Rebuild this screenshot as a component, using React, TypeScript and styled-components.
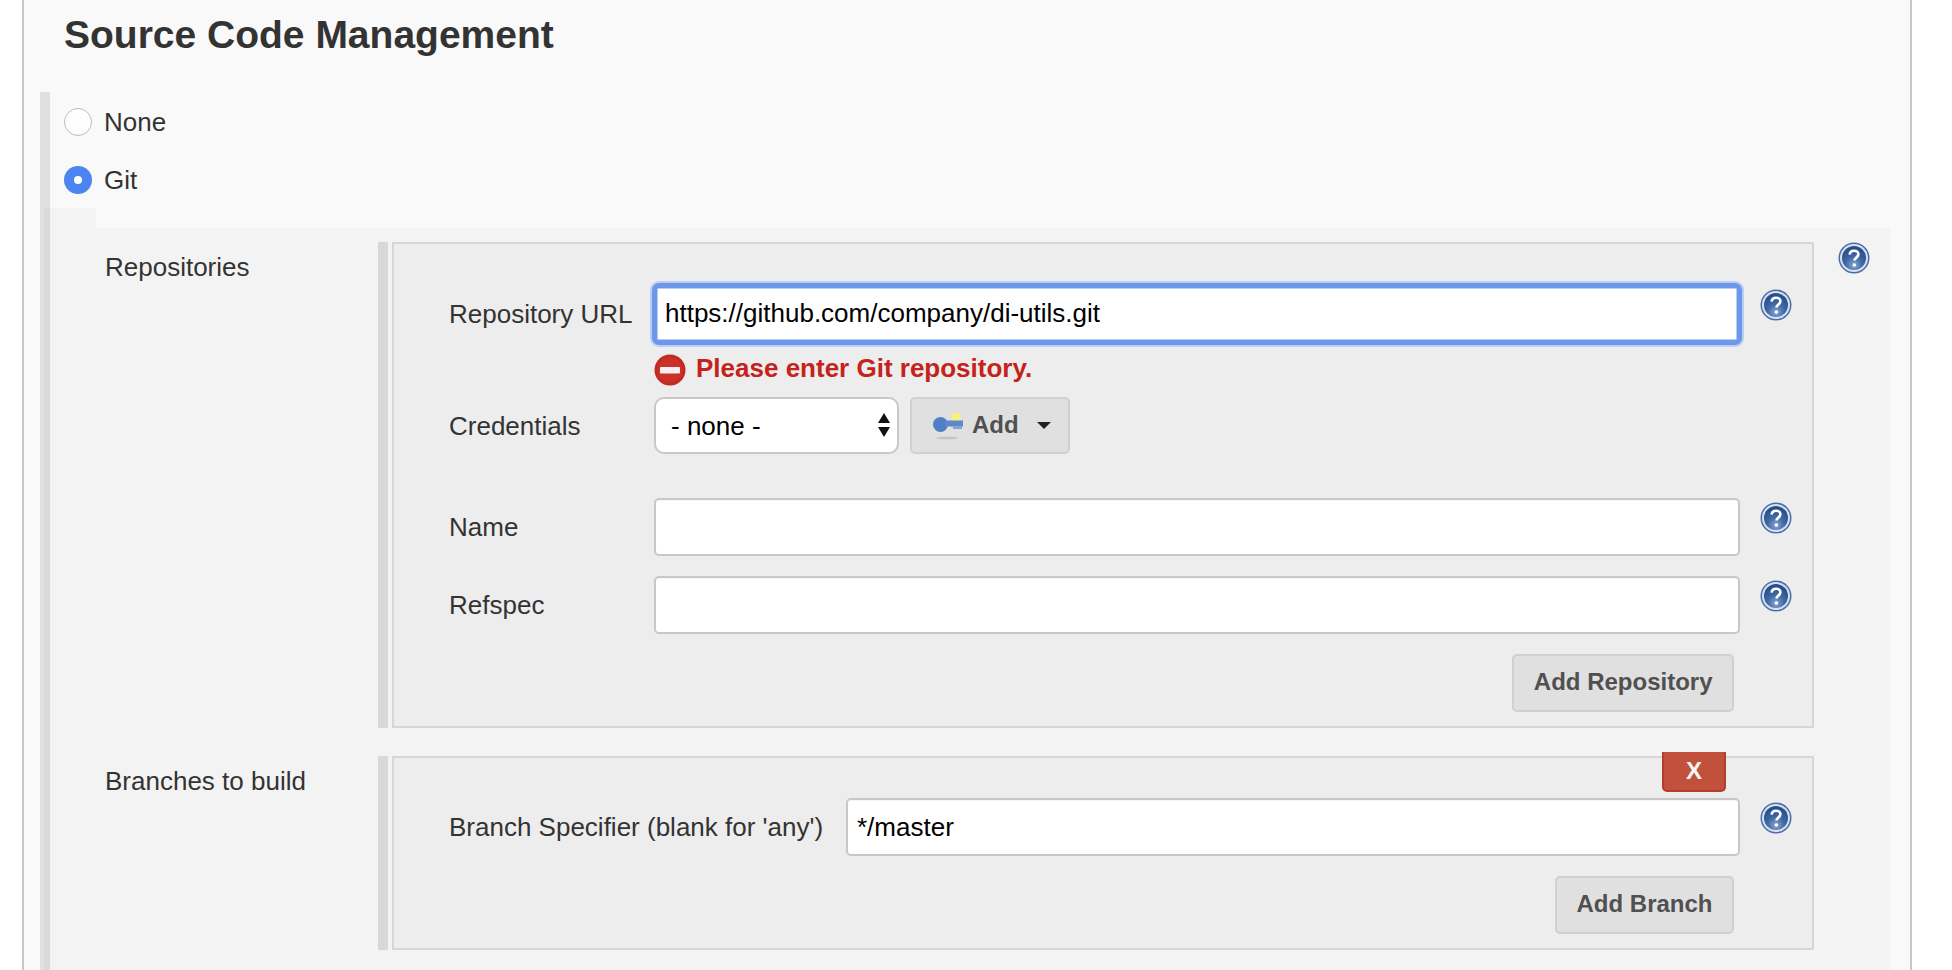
import React from "react";
import styled, { createGlobalStyle } from "styled-components";

const Global = createGlobalStyle`
  html, body { margin: 0; padding: 0; background: #fff; height: 970px; overflow: hidden; }
  body { font-family: "Liberation Sans", Arial, sans-serif; color: #333; }
  * { box-sizing: border-box; }
`;

const Panel = styled.div`
  margin: 0 40px 0 22px;
  height: 970px;
  overflow: hidden;
  background: #f9f9f9;
  border-left: 2px solid #c8c8c8;
  border-right: 2px solid #c8c8c8;
`;
const Title = styled.h2`
  margin: 0;
  height: 92px;
  padding: 12px 0 0 40px;
  font-size: 39px;
  line-height: 46px;
  font-weight: 700;
  color: #333;
`;
const Section = styled.div`
  margin: 0 20px 0 16px;
  border-left: 10px solid #e0e0e0;
  padding-top: 1px;
`;
const RadioRow = styled.label`
  display: flex;
  align-items: center;
  gap: 12px;
  height: 58px;
  padding-left: 14px;
  font-size: 26px;
  color: #333;
`;
const RadioDot = styled.span<{ $checked?: boolean }>`
  width: 28px;
  height: 28px;
  border-radius: 50%;
  flex: none;
  display: flex;
  align-items: center;
  justify-content: center;
  background: ${(p) => (p.$checked ? "#4a85f2" : "linear-gradient(#fff, #fdfdfd)")};
  border: ${(p) => (p.$checked ? "none" : "1.5px solid #bdbdbd")};
  &::after {
    content: "";
    display: ${(p) => (p.$checked ? "block" : "none")};
    width: 8px;
    height: 8px;
    border-radius: 50%;
    background: #fff;
  }
`;
const Nested = styled.div`
  margin: -1px 0 0 -6px;
`;
const NestedTab = styled.div`
  width: 52px;
  height: 20px;
  background: rgba(0, 0, 0, 0.025);
`;
const NestedBody = styled.div`
  background: rgba(0, 0, 0, 0.025);
  padding-top: 14px;
  height: 760px;
`;
const Property = styled.div<{ $gap?: number }>`
  display: grid;
  grid-template-columns: 334px 10px 1fr 32px;
  margin-top: ${(p) => p.$gap ?? 0}px;
  margin-right: 20px;
`;
const PropertyLabel = styled.div`
  padding: 11px 0 0 61px;
  font-size: 26px;
  line-height: 28px;
  color: #333;
`;
const PropertyBar = styled.div`
  background: #d8d8d8;
`;
const Box = styled.div`
  margin: 0 24px 0 4px;
  background: #ededed;
  border: 2px solid #d6d6d6;
  padding: 0 20px 0 55px;
`;
const Row = styled.div<{ $top: number; $label?: number }>`
  display: grid;
  grid-template-columns: ${(p) => p.$label ?? 205}px 1fr 52px;
  align-items: center;
  margin-top: ${(p) => p.$top}px;
`;
const HelpSlot = styled.div`
  display: flex;
  justify-content: flex-end;
  align-self: start;
  padding-top: 4px;
`;
const RowLabel = styled.div`
  font-size: 26px;
  line-height: 28px;
  color: #333;
  white-space: nowrap;
`;
const TextInput = styled.input<{ $focused?: boolean }>`
  display: block;
  width: 100%;
  height: 58px;
  padding: ${(p) => (p.$focused ? "0 7px 2px 8px" : "0 9px")};
  font: 26px "Liberation Sans", Arial, sans-serif;
  color: #000;
  background: #fff;
  outline: none;
  border-radius: 5px;
  border: ${(p) => (p.$focused ? "3px solid #6d97ea" : "2px solid #c8c8c8")};
  box-shadow: ${(p) =>
    p.$focused
      ? "inset 0 0 0 1px #b8cff5, 0 0 0 2px #6d97ea, 0 0 0 4px #b8cff5"
      : "inset 0 1px 1px rgba(0,0,0,.04)"};
`;
const ErrorLine = styled.div`
  display: flex;
  align-items: center;
  gap: 10px;
  margin: 10px 0 0 205px;
  height: 34px;
  font-size: 26px;
  font-weight: 700;
  color: #c4231b;
`;
const ErrorText = styled.span`
  padding-bottom: 4px;
`;
const Controls = styled.div`
  display: flex;
  gap: 11px;
`;
const SelectWrap = styled.div`
  position: relative;
  width: 245px;
  height: 57px;
`;
const Select = styled.select`
  appearance: none;
  width: 100%;
  height: 100%;
  padding: 0 15px;
  border-radius: 10px;
  border: 2px solid #c8c8c8;
  background: #fff;
  color: #000;
  font: 26px "Liberation Sans", Arial, sans-serif;
`;
const SelectArrows = styled.svg`
  position: absolute;
  right: 9px;
  top: 16px;
  pointer-events: none;
`;
const Button = styled.button`
  display: inline-flex;
  align-items: center;
  justify-content: center;
  height: 58px;
  padding: 0 19.5px 2px;
  border: 2px solid #d0d0d0;
  border-radius: 5px;
  background: #e0e0e0;
  color: #505050;
  font: 700 24px "Liberation Sans", Arial, sans-serif;
`;
const AddButton = styled(Button)`
  width: 160px;
  height: 57px;
  padding: 0 0 0 21px;
  justify-content: flex-start;
`;
const AddLabel = styled.span`
  margin: 0 18px 2px 9px;
`;
const ButtonRow = styled.div<{ $top: number; $bottom: number }>`
  display: flex;
  justify-content: flex-end;
  margin: ${(p) => p.$top}px 58px ${(p) => p.$bottom}px 0;
`;
const BranchBox = styled(Box)`
  position: relative;
`;
const DeleteButton = styled.button`
  position: absolute;
  top: -6px;
  right: 86px;
  width: 64px;
  height: 40px;
  border: 2px solid #b23f2e;
  border-top: 0;
  border-radius: 0 0 5px 5px;
  background: #c1503c;
  color: #f5f5f5;
  font: 700 24px "Liberation Sans", Arial, sans-serif;
`;

const HelpIcon = () => (
  <svg width="32" height="32" viewBox="0 0 32 32">
    <defs>
      <radialGradient id="helpDisc" cx="50%" cy="80%" r="70%">
        <stop offset="0%" stopColor="#8aa6d0" />
        <stop offset="50%" stopColor="#3f68a4" />
        <stop offset="100%" stopColor="#264f8c" />
      </radialGradient>
    </defs>
    <circle cx="16" cy="16" r="15.5" fill="#4a6ea6" />
    <circle cx="16" cy="16" r="14" fill="#d7e1ef" />
    <circle cx="16" cy="16" r="12" fill="url(#helpDisc)" />
    <path d="M11.6 12.6c.3-2.6 2.2-3.9 4.5-3.9 2.5 0 4.3 1.5 4.3 3.6 0 1.6-.9 2.4-2.1 3.3-1.2.9-1.8 1.5-1.8 3" fill="none" stroke="#fff" strokeWidth="2.6" />
    <circle cx="16.4" cy="23" r="1.8" fill="#fff" />
  </svg>
);

const ErrorIcon = () => (
  <svg width="32" height="32" viewBox="0 0 32 32">
    <circle cx="16" cy="16" r="15.5" fill="#bf2a22" />
    <circle cx="16" cy="16" r="12.5" fill="#cb3128" />
    <rect x="6" y="13" width="20" height="6.5" rx="1" fill="#f7eeee" />
  </svg>
);

const KeyIcon = () => (
  <svg width="30" height="28" viewBox="0 0 30 28">
    <defs>
      <filter id="keySoft"><feGaussianBlur stdDeviation="0.6" /></filter>
    </defs>
    <g filter="url(#keySoft)">
      <ellipse cx="14" cy="26" rx="11" ry="1.4" fill="#c4c4c4" />
      <circle cx="23" cy="5" r="4.5" fill="#f6f07c" />
      <ellipse cx="7.5" cy="12.5" rx="7.5" ry="7.5" fill="#4f80c6" />
      <rect x="12" y="8.5" width="18" height="6" fill="#5d8aca" />
      <rect x="20" y="14" width="9" height="3" fill="#83a4d2" />
    </g>
  </svg>
);

const Caret = () => (
  <svg width="14" height="7" viewBox="0 0 14 7">
    <path d="M0 0h14L7 7z" fill="#222" />
  </svg>
);

export default function App() {
  return (
    <>
      <Global />
      <Panel>
        <Title>Source Code Management</Title>
        <Section>
          <RadioRow><RadioDot />None</RadioRow>
          <RadioRow><RadioDot $checked />Git</RadioRow>
          <Nested>
            <NestedTab />
            <NestedBody>
              <Property>
                <PropertyLabel>Repositories</PropertyLabel>
                <PropertyBar />
                <Box>
                  <Row $top={41}>
                    <RowLabel>Repository URL</RowLabel>
                    <TextInput $focused readOnly value="https://github.com/company/di-utils.git" />
                    <HelpSlot><HelpIcon /></HelpSlot>
                  </Row>
                  <ErrorLine><ErrorIcon /><ErrorText>Please enter Git repository.</ErrorText></ErrorLine>
                  <Row $top={10}>
                    <RowLabel>Credentials</RowLabel>
                    <Controls>
                      <SelectWrap>
                        <Select defaultValue="none"><option value="none">- none -</option></Select>
                        <SelectArrows width="12" height="24" viewBox="0 0 12 24">
                          <path d="M6 0l6 10H0zM6 24l6-10H0z" fill="#111" />
                        </SelectArrows>
                      </SelectWrap>
                      <AddButton><KeyIcon /><AddLabel>Add</AddLabel><Caret /></AddButton>
                    </Controls>
                    <span />
                  </Row>
                  <Row $top={44}>
                    <RowLabel>Name</RowLabel>
                    <TextInput readOnly value="" />
                    <HelpSlot><HelpIcon /></HelpSlot>
                  </Row>
                  <Row $top={20}>
                    <RowLabel>Refspec</RowLabel>
                    <TextInput readOnly value="" />
                    <HelpSlot><HelpIcon /></HelpSlot>
                  </Row>
                  <ButtonRow $top={20} $bottom={14}><Button>Add Repository</Button></ButtonRow>
                </Box>
                <HelpIcon />
              </Property>
              <Property $gap={28}>
                <PropertyLabel>Branches to build</PropertyLabel>
                <PropertyBar />
                <BranchBox>
                  <DeleteButton>X</DeleteButton>
                  <Row $top={40} $label={397}>
                    <RowLabel>Branch Specifier (blank for 'any')</RowLabel>
                    <TextInput readOnly value="*/master" />
                    <HelpSlot><HelpIcon /></HelpSlot>
                  </Row>
                  <ButtonRow $top={20} $bottom={14}><Button>Add Branch</Button></ButtonRow>
                </BranchBox>
                <span />
              </Property>
            </NestedBody>
          </Nested>
        </Section>
      </Panel>
    </>
  );
}
